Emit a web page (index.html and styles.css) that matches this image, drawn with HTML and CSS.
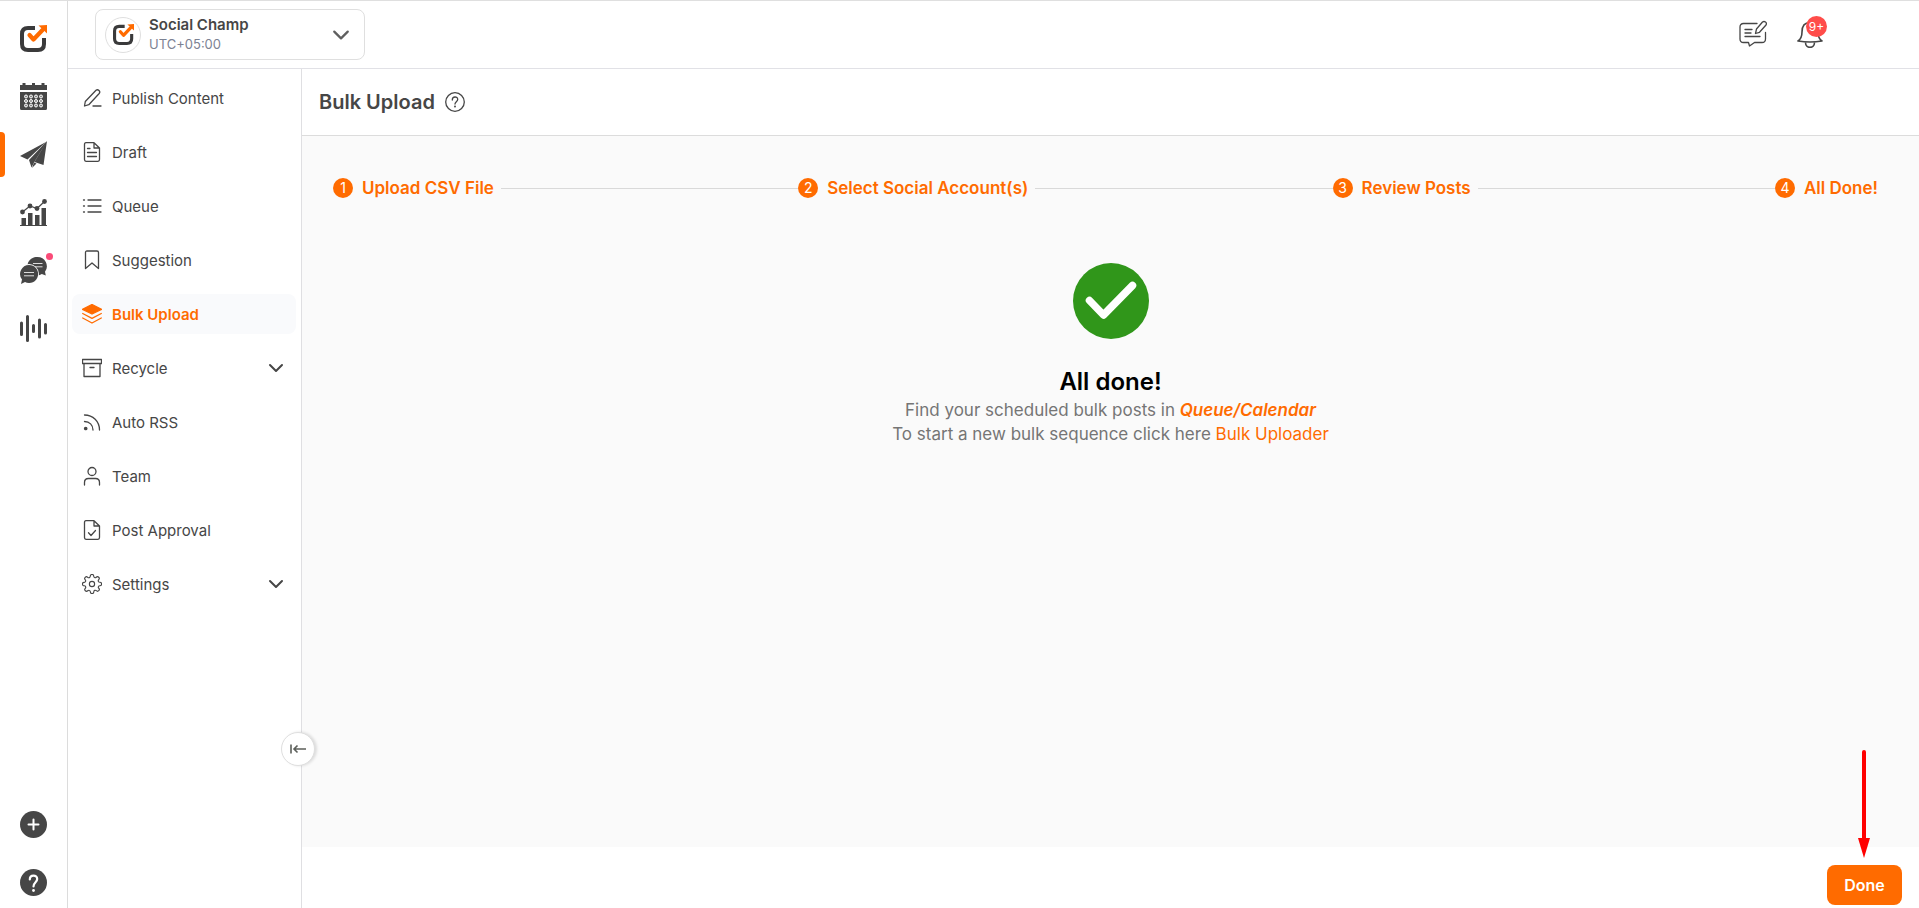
FILE: index.html
```
<!DOCTYPE html>
<html lang="en">
<head>
    <meta charset="UTF-8">
    <meta name="viewport" content="width=device-width, initial-scale=1">
    <title>Bulk Upload - Social Champ</title>
    <link rel="stylesheet" href="styles.css">
</head>
<body>

<!-- Shared logo shape -->
<svg class="defs" aria-hidden="true">
    <symbol id="logo" viewBox="0 0 27 27">
        <path d="M15 3H8Q2 3 2 9v10q0 6 6 6h10q6 0 6-6v-6" fill="none" stroke="#3a3a3b" stroke-width="4"/>
        <path d="M9.500 10l4 4.500 9-9.500" fill="none" stroke="#ff6b00" stroke-width="4.200" stroke-linecap="round" stroke-linejoin="round"/>
        <path d="M18.500.500L27 0v8.500z" fill="#ff6b00"/>
    </symbol>
    <symbol id="chevron" viewBox="0 0 16 16">
        <path d="M2 5l6 6 6-6" fill="none" stroke="currentColor" stroke-width="2" stroke-linecap="round" stroke-linejoin="round"/>
    </symbol>
</svg>

<div class="app">

    <!-- Icon rail -->
    <div class="rail">
        <nav class="rail-group" aria-label="Main">
            <a href="#" class="rail-link" aria-label="Home"><svg><use href="#logo"/></svg></a>
            <a href="#" class="rail-link" aria-label="Calendar">
                <svg viewBox="0 0 27 27" fill="#464646">
                    <path d="M0 2h27v5H0zM2.500 0h3v3h-3zM12 0h3v3h-3zM21.500 0h3v3h-3zM0 9h27v16.500q0 1.500-1.500 1.500h-24Q0 27 0 25.500z"/>
                    <g fill="#888" stroke="#fff" stroke-width="1">
                        <circle cx="6" cy="13.500" r="1.500"/><circle cx="11" cy="13.500" r="1.500"/><circle cx="16" cy="13.500" r="1.500"/><circle cx="21" cy="13.500" r="1.500"/>
                        <circle cx="6" cy="18" r="1.500"/><circle cx="11" cy="18" r="1.500"/><circle cx="16" cy="18" r="1.500"/><circle cx="21" cy="18" r="1.500"/>
                        <circle cx="6" cy="22.500" r="1.500"/><circle cx="11" cy="22.500" r="1.500"/><circle cx="16" cy="22.500" r="1.500"/><circle cx="21" cy="22.500" r="1.500"/>
                    </g>
                </svg>
            </a>
            <a href="#" class="rail-link current" aria-label="Publish">
                <svg viewBox="0 0 27 27" fill="#464646">
                    <path d="M26 1L0 15l7.500 3.500zM27 0L9 19l2.500 7.500L14 21.500zM27 0L14.500 21l9 3z"/>
                    <path d="M12 27l4.500-4.500-2.500-1z"/>
                </svg>
            </a>
            <a href="#" class="rail-link" aria-label="Analytics">
                <svg viewBox="0 0 27 27" fill="#464646">
                    <path d="M1.500 19H6v7H1.500zM8 14h4.500v12H8zM15 16h4.500v10H15zM21.500 9H26v17h-4.500zM0 26h27v1H0z"/>
                    <circle cx="2.500" cy="13" r="2.400"/><circle cx="10" cy="7" r="2.400"/><circle cx="17" cy="9.500" r="2.400"/><circle cx="24.500" cy="2.500" r="2.400"/>
                    <path d="M2.500 13L10 7l7 2.500 7.500-7" fill="none" stroke="#464646" stroke-width="1.200"/>
                </svg>
            </a>
            <a href="#" class="rail-link" aria-label="Engage">
                <svg viewBox="0 0 27 27" fill="#464646">
                    <path d="M17.500 0a9.300 9.300 0 0 1 7.500 14.800l.800 3.700-4-1.500A9.300 9.300 0 1 1 17.500 0z"/>
                    <path d="M13 6.500h9.500M13 9.800h9.500" stroke="#ddd"/>
                    <circle cx="9" cy="17" r="10" fill="#fff"/>
                    <path d="M9 8a9 9 0 1 1-4 17l-4 2 1-4.500A9 9 0 0 1 9 8z"/>
                    <path d="M4 15.500h10M4 18.800h10" stroke="#ddd"/>
                </svg>
                <span class="rail-dot"></span>
            </a>
            <a href="#" class="rail-link" aria-label="Listening">
                <svg viewBox="0 0 27 27" fill="none" stroke="#464646" stroke-width="3" stroke-linecap="round">
                    <path d="M1.500 8v11.500M7.500 1.500v24M13.500 10.500v6M19.500 5v17M25.500 9.500v8.500"/>
                </svg>
            </a>
        </nav>
        <div class="rail-group">
            <button type="button" class="rail-link" aria-label="Add">
                <svg viewBox="0 0 27 27"><circle cx="13.500" cy="13.500" r="13.500" fill="#464646"/><path d="M13.500 8.500v10M8.500 13.500h10" stroke="#fff" stroke-width="2" stroke-linecap="round"/></svg>
            </button>
            <button type="button" class="rail-link" aria-label="Help">
                <svg viewBox="0 0 27 27"><circle cx="13.500" cy="13.500" r="13.500" fill="#464646"/><path d="M9.800 10.500c0-5 7.400-5 7.400-.500 0 3.200-3.700 3.300-3.700 7.500" fill="none" stroke="#fff" stroke-width="2.200" stroke-linecap="round"/><circle cx="13.500" cy="21.500" r="1.400" fill="#fff"/></svg>
            </button>
        </div>
    </div>

    <div class="page">

        <!-- Top bar -->
        <header class="topbar">
            <button type="button" class="workspace">
                <span class="avatar"><svg><use href="#logo"/></svg></span>
                <span class="workspace-text">
                    <span class="workspace-name">Social Champ</span>
                    <span class="workspace-zone">UTC+05:00</span>
                </span>
                <svg class="workspace-arrow"><use href="#chevron"/></svg>
            </button>
            <div class="topbar-actions">
                <button type="button" class="icon-btn" aria-label="Feedback">
                    <svg viewBox="0 0 28 28" fill="none" stroke="#464646" stroke-width="1.300" stroke-linejoin="round" stroke-linecap="round">
                        <path d="M18 3.500H4.500q-3.500 0-3.500 3.500v12q0 3.500 3.500 3.500h5l1 3.500 5-3.500h7.500q3.500 0 3.500-3.500V12.500M6 9.500h7M6 13h6M6 16.500h15"/>
                        <path d="M17.500 9l6-7q1.500-1 3 0t.500 3l-6.500 7.300-4 1.200z"/>
                    </svg>
                </button>
                <button type="button" class="icon-btn" aria-label="Notifications">
                    <svg viewBox="0 0 28 28" fill="none" stroke="#464646" stroke-width="1.600" stroke-linejoin="round">
                        <path d="M14 2.500C7 2.500 6 8 6 12s-1 7-4 9q12 2 24 0c-3-2-4-5-4-9s-1-9.500-8-9.500zM9.500 22.500c0 6.500 9 6.500 9 0"/>
                    </svg>
                    <span class="badge">9+</span>
                </button>
            </div>
        </header>

        <div class="body">

            <!-- Sidebar menu -->
            <aside class="sidebar">
                <nav class="menu" aria-label="Publish">
                    <a href="#" class="menu-item">
                        <svg viewBox="0 0 20 20"><path d="M2.500 18l.800-4.500L14 2.300q1.500-1.200 3 .200t.200 3L6.800 16.700zM11 18h8"/></svg>
                        Publish Content
                    </a>
                    <a href="#" class="menu-item">
                        <svg viewBox="0 0 20 20"><path d="M12 .700H4Q2.500.700 2.500 2.500v15q0 1.800 1.500 1.800h12q1.500 0 1.500-1.800V6zV6h5.500M5.500 6.500H8M5.500 10.500h9M5.500 14.500h9"/></svg>
                        Draft
                    </a>
                    <a href="#" class="menu-item">
                        <svg viewBox="0 0 20 20"><path d="M6 4h13M6 10h13M6 16h13M1.500 4h1M1.500 10h1M1.500 16h1"/></svg>
                        Queue
                    </a>
                    <a href="#" class="menu-item">
                        <svg viewBox="0 0 20 20"><path d="M3.500 18.500v-16Q3.500 1 5 1h10q1.500 0 1.500 1.500v16L10 13z"/></svg>
                        Suggestion
                    </a>
                    <a href="#" class="menu-item active">
                        <svg viewBox="0 0 20 20"><path d="M10 .500l9.500 4.800L10 10 .500 5.300z" fill="currentColor"/><path d="M.700 9.500L10 14.300l9.300-4.800M.700 14L10 19l9.300-5"/></svg>
                        Bulk Upload
                    </a>
                    <a href="#" class="menu-item">
                        <svg viewBox="0 0 20 20"><path d="M.500 1.500h19v4H.500zM2 5.500h16v13H2zM8 9.500h4"/></svg>
                        Recycle
                        <svg class="menu-arrow"><use href="#chevron"/></svg>
                    </a>
                    <a href="#" class="menu-item">
                        <svg viewBox="0 0 20 20"><path d="M2.500 3C11 3 17.500 9.500 17.500 18M2.500 9.500c5 0 8.500 3.500 8.500 8.500"/><circle cx="3.700" cy="16.500" r="1.200" fill="currentColor"/></svg>
                        Auto RSS
                    </a>
                    <a href="#" class="menu-item">
                        <svg viewBox="0 0 20 20"><circle cx="10" cy="5.500" r="4"/><path d="M2.500 19v-2.500q0-4 4-4h7q4 0 4 4V19"/></svg>
                        Team
                    </a>
                    <a href="#" class="menu-item">
                        <svg viewBox="0 0 20 20"><path d="M12 .700H4Q2.500.700 2.500 2.500v15q0 1.800 1.500 1.800h12q1.500 0 1.500-1.800V6zV6h5.500M6.500 12.800L9 15.500l4.500-5"/></svg>
                        Post Approval
                    </a>
                    <a href="#" class="menu-item">
                        <svg viewBox="0.500 0.500 23 23"><circle cx="12" cy="12" r="3"/><path d="M19.400 15a1.650 1.650 0 0 0 .33 1.820l.06.060a2 2 0 0 1-2.830 2.830l-.06-.06a1.650 1.650 0 0 0-1.820-.33 1.650 1.650 0 0 0-1 1.510V21a2 2 0 0 1-4 0v-.09A1.650 1.650 0 0 0 9 19.400a1.650 1.650 0 0 0-1.820.33l-.06.06a2 2 0 0 1-2.830-2.830l.06-.06a1.650 1.650 0 0 0 .33-1.820 1.650 1.650 0 0 0-1.510-1H3a2 2 0 0 1 0-4h.09A1.650 1.650 0 0 0 4.600 9a1.650 1.650 0 0 0-.33-1.820l-.06-.06a2 2 0 0 1 2.830-2.830l.06.06a1.650 1.650 0 0 0 1.820.33H9a1.650 1.650 0 0 0 1-1.510V3a2 2 0 0 1 4 0v.09a1.650 1.650 0 0 0 1 1.510 1.650 1.650 0 0 0 1.820-.33l.06-.06a2 2 0 0 1 2.830 2.830l-.06.06a1.650 1.650 0 0 0-.33 1.820V9a1.650 1.650 0 0 0 1.510 1H21a2 2 0 0 1 0 4h-.09a1.650 1.650 0 0 0-1.510 1z"/></svg>
                        Settings
                        <svg class="menu-arrow"><use href="#chevron"/></svg>
                    </a>
                </nav>
                <button type="button" class="collapse" aria-label="Collapse menu">
                    <svg viewBox="0 0 16 16" fill="none" stroke="#5c5f5a" stroke-width="1.600"><path d="M1 3.500v9M16 8H4M7.500 4.500L4 8l3.500 3.500"/></svg>
                </button>
            </aside>

            <!-- Main content -->
            <main class="main">
                <div class="title-bar">
                    <h1>Bulk Upload</h1>
                    <button type="button" class="help" aria-label="About bulk upload">
                        <svg viewBox="0 0 20 20" fill="none" stroke="#464646" stroke-width="1.300" stroke-linecap="round"><circle cx="10" cy="10" r="9.300"/><path d="M7.300 8c0-4 5.400-3.800 5.400-.500 0 2-2.700 2.500-2.700 4.500"/><circle cx="10" cy="14.500" r=".4"/></svg>
                    </button>
                </div>

                <section class="content">
                    <ol class="steps">
                        <li class="step"><span class="step-num">1</span>Upload CSV File</li>
                        <li class="step"><span class="step-num">2</span>Select Social Account(s)</li>
                        <li class="step"><span class="step-num">3</span>Review Posts</li>
                        <li class="step"><span class="step-num">4</span>All Done!</li>
                    </ol>

                    <div class="result">
                        <svg class="check" viewBox="0 0 76 76"><circle cx="38" cy="38" r="38" fill="#30961a"/><path d="M16.500 37.500L30.500 52l29-29.500" fill="none" stroke="#fff" stroke-width="7.500" stroke-linecap="round" stroke-linejoin="round"/></svg>
                        <h2>All done!</h2>
                        <p>Find your scheduled bulk posts in <a href="#" class="queue-link">Queue/Calendar</a></p>
                        <p>To start a new bulk sequence click here <a href="#">Bulk Uploader</a></p>
                    </div>
                </section>

                <footer class="footer">
                    <div class="done-wrap">
                        <svg class="pointer" viewBox="0 0 12 108" aria-hidden="true"><path d="M6 2v88" stroke="#f00" stroke-width="4" stroke-linecap="round"/><path d="M0 88h12L6 108z" fill="#f00"/></svg>
                        <button type="button" class="done">Done</button>
                    </div>
                </footer>
            </main>
        </div>
    </div>
</div>

</body>
</html>
```
FILE: styles.css
```
* {
    box-sizing: border-box;
}
body {
    margin: 0;
    font-family: Inter, "Open Sans", sans-serif;
    font-size: 16px;
    color: #464646;
    background: #fff;
}
button {
    font: inherit;
    color: inherit;
    background: none;
    border: none;
    padding: 0;
    cursor: pointer;
}
a {
    color: #ff6b00;
    text-decoration: none;
}
svg {
    display: block;
    flex: none;
}
.defs {
    position: absolute;
    width: 0;
    height: 0;
}

.app {
    display: flex;
    min-height: 100vh;
    border-top: 1px solid #dfdfdf;
}

/* Icon rail */
.rail {
    width: 68px;
    flex: none;
    display: flex;
    flex-direction: column;
    justify-content: space-between;
    padding: 24px 0 12px;
    border-right: 1px solid #dcdcdc;
}
.rail-group {
    display: flex;
    flex-direction: column;
    gap: 31px;
}
.rail-link {
    position: relative;
    display: flex;
    justify-content: center;
}
.rail-link svg {
    width: 27px;
    height: 27px;
}
.rail-link.current::before {
    content: "";
    position: absolute;
    left: 0;
    top: -9px;
    width: 5px;
    height: 45px;
    background: #ff6b00;
    border-radius: 0 4px 4px 0;
}
.rail-dot {
    position: absolute;
    top: -4px;
    right: 14px;
    width: 7px;
    height: 7px;
    border-radius: 50%;
    background: #fa4b78;
}

.page {
    flex: 1;
    min-width: 0;
    display: flex;
    flex-direction: column;
}

/* Top bar */
.topbar {
    height: 68px;
    display: flex;
    justify-content: space-between;
    align-items: center;
    padding: 0 95px 0 27px;
    border-bottom: 1px solid #e1e1e6;
}
.workspace {
    width: 270px;
    height: 51px;
    display: flex;
    align-items: center;
    gap: 8px;
    padding: 0 14px 0 9px;
    border: 1px solid #dfdfdf;
    border-radius: 8px;
    text-align: left;
}
.avatar {
    width: 36px;
    height: 36px;
    display: flex;
    align-items: center;
    justify-content: center;
    border: 1px solid #dfdfdf;
    border-radius: 50%;
}
.avatar svg {
    width: 21px;
    height: 21px;
}
.workspace-text {
    flex: 1;
    display: flex;
    flex-direction: column;
    padding-bottom: 2px;
}
.workspace-name {
    font-size: 15px;
    line-height: 20px;
    font-weight: 600;
}
.workspace-zone {
    font-size: 13px;
    line-height: 18px;
    color: #7c8293;
}
.workspace-arrow {
    width: 18px;
    height: 18px;
    color: #5f5f5f;
}
.topbar-actions {
    display: flex;
    gap: 29px;
    padding-bottom: 2px;
}
.icon-btn {
    position: relative;
}
.icon-btn svg {
    width: 28px;
    height: 28px;
}
.badge {
    position: absolute;
    top: -4px;
    right: -3px;
    width: 21px;
    height: 21px;
    border-radius: 50%;
    background: #ff4d4a;
    color: #fff;
    font-size: 12px;
    line-height: 21px;
    text-align: center;
}

.body {
    flex: 1;
    display: flex;
}

/* Sidebar */
.sidebar {
    position: relative;
    width: 234px;
    flex: none;
    padding: 9px 5px 0 4px;
    border-right: 1px solid #dfdfe2;
}
.menu {
    display: flex;
    flex-direction: column;
    gap: 14px;
}
.menu-item {
    height: 40px;
    display: flex;
    align-items: center;
    gap: 10px;
    padding: 0 12px 0 10px;
    border-radius: 8px;
    font-size: 15px;
    color: #464646;
}
.menu-item svg {
    width: 20px;
    height: 20px;
    fill: none;
    stroke: currentColor;
    stroke-width: 1.3;
    stroke-linecap: round;
    stroke-linejoin: round;
}
.menu-item .menu-arrow {
    width: 16px;
    height: 16px;
    margin-left: auto;
}
.menu-item.active {
    background: #f9fafc;
    color: #ff6b00;
    font-weight: 600;
}
.collapse {
    position: absolute;
    right: -14px;
    bottom: 142px;
    width: 34px;
    height: 34px;
    display: flex;
    align-items: center;
    justify-content: center;
    background: #fff;
    border: 1px solid #dfdfdf;
    border-radius: 50%;
    box-shadow: 2px 0 3px rgba(0, 0, 0, 0.12);
}
.collapse svg {
    width: 16px;
    height: 16px;
}

/* Main */
.main {
    flex: 1;
    min-width: 0;
    display: flex;
    flex-direction: column;
}
.title-bar {
    height: 67px;
    display: flex;
    align-items: center;
    gap: 10px;
    padding: 0 17px;
    border-bottom: 1px solid #dcdcdc;
}
h1 {
    margin: 0;
    font-size: 20px;
    font-weight: 600;
}
.help svg {
    width: 20px;
    height: 20px;
}
.content {
    flex: 1;
    padding-top: 40px;
    background: #fafafa;
}
.steps {
    display: flex;
    margin: 0;
    padding: 0 41px 0 31px;
    list-style: none;
}
.step {
    flex: 1 1 auto;
    display: flex;
    align-items: center;
    font-size: 17px;
    line-height: 24px;
    font-weight: 600;
    color: #ff6b00;
    white-space: nowrap;
}
.step:last-child {
    flex: none;
}
.step:not(:last-child)::after {
    content: "";
    flex: 1;
    height: 1px;
    margin-left: 7px;
    background: #d9d9d9;
}
.step-num {
    width: 20px;
    height: 20px;
    margin-right: 9px;
    border-radius: 50%;
    background: #ff6b00;
    color: #fff;
    font-size: 14px;
    line-height: 20px;
    font-weight: 400;
    text-align: center;
}
.result {
    display: flex;
    flex-direction: column;
    align-items: center;
    margin-top: 63px;
}
.check {
    width: 76px;
    height: 76px;
}
h2 {
    margin: 27px 0 0;
    font-size: 24px;
    line-height: 32px;
    font-weight: 600;
    color: #000;
}
.result p {
    margin: 0;
    font-size: 17px;
    line-height: 24px;
    color: #757575;
}
.queue-link {
    font-style: italic;
    font-weight: 600;
}

/* Footer */
.footer {
    height: 61px;
    display: flex;
    justify-content: flex-end;
    padding: 18px 17px 3px;
}
.done-wrap {
    position: relative;
}
.done {
    width: 75px;
    height: 40px;
    border-radius: 8px;
    background: #ff6b00;
    color: #fff;
    font-weight: 600;
}
.pointer {
    position: absolute;
    left: 31px;
    bottom: 47px;
    width: 12px;
    height: 108px;
}
```
